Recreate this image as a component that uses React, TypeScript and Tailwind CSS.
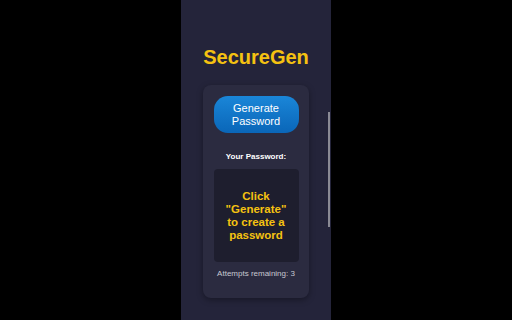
export default function App() {
  return (
    <div className="w-[512px] h-[320px] bg-black flex justify-center overflow-hidden" style={{ fontFamily: '"Liberation Sans", Arial, sans-serif' }}>
      <div className="relative w-[150px] h-[320px] bg-[#24243a] flex flex-col items-center">
        <h1 className="mt-[44px] text-[20px] leading-[26px] font-bold text-[#f5c211]">SecureGen</h1>
        <div className="mt-[15px] w-[106px] h-[213px] rounded-[8px] bg-[#2b2b40] shadow-[0_2px_6px_rgba(0,0,0,0.35)] flex flex-col items-center pt-[11px]">
          <button className="w-[85px] h-[37px] rounded-[14px] bg-gradient-to-b from-[#1a86d8] to-[#0a66b8] text-white text-[11px] leading-[13px]">Generate<br />Password</button>
          <div className="mt-[19px] text-[8px] leading-[10px] font-bold text-white">Your Password:</div>
          <div className="mt-[7px] w-[85px] h-[93px] rounded-[4px] bg-[#1e1e2e] flex items-center justify-center text-center text-[11.5px] leading-[13px] font-bold text-[#f5c211]">Click<br />"Generate"<br />to create a<br />password</div>
          <div className="mt-[7px] text-[8px] leading-[10px] text-[#c8c8d0]">Attempts remaining: 3</div>
        </div>
        <div className="absolute right-[1px] top-[112px] w-[2px] h-[115px] bg-[#8a8a94]" />
      </div>
    </div>
  );
}
